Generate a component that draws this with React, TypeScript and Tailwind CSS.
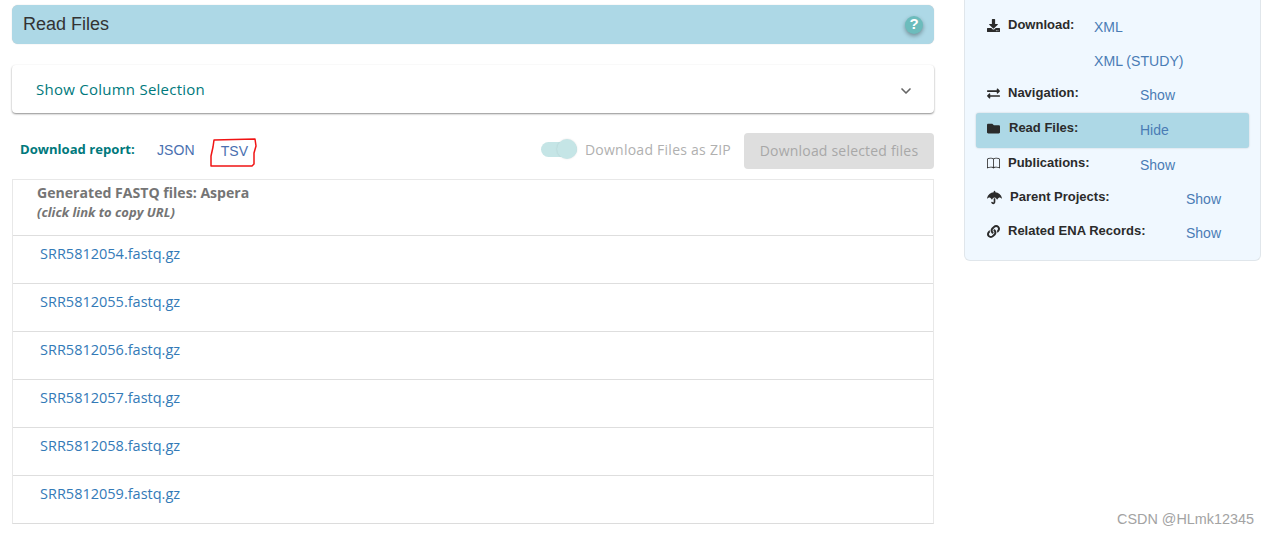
import { ChevronDown } from 'lucide-react';
import { FaDownload, FaExchangeAlt, FaFolder, FaUmbrella, FaLink } from 'react-icons/fa';
import { BsBook } from 'react-icons/bs';

const FILES = [
  'SRR5812054.fastq.gz',
  'SRR5812055.fastq.gz',
  'SRR5812056.fastq.gz',
  'SRR5812057.fastq.gz',
  'SRR5812058.fastq.gz',
  'SRR5812059.fastq.gz',
];

const SIDE_ROWS = [
  { icon: FaExchangeAlt, size: 13, label: 'Navigation:', value: 'Show', labelW: 'w-[132px]', iconW: 'w-[21px]', active: false },
  { icon: FaFolder, size: 13, label: 'Read Files:', value: 'Hide', labelW: 'w-[131px]', iconW: 'w-[22px]', active: true },
  { icon: BsBook, size: 13, label: 'Publications:', value: 'Show', labelW: 'w-[132px]', iconW: 'w-[21px]', active: false },
  { icon: FaUmbrella, size: 15, label: 'Parent Projects:', value: 'Show', labelW: 'w-[176px]', iconW: 'w-[23px]', active: false },
  { icon: FaLink, size: 13, label: 'Related ENA Records:', value: 'Show', labelW: 'w-[178px]', iconW: 'w-[21px]', active: false },
];

function MainColumn() {
  return (
    <main className="w-[922px] shrink-0 pt-[5px] font-['Open_Sans',sans-serif]">
      <div className="flex h-[39px] items-center justify-between rounded-md bg-[#add8e6] pl-[11px] pr-[11px] shadow-[0_0_1px_rgba(0,0,0,0.25)]">
        <h2 className="font-['Liberation_Sans',sans-serif] text-[18px] text-[#333]">Read Files</h2>
        <span className="flex h-[18px] w-[18px] items-center justify-center rounded-full bg-[#6cbcbc] font-['Liberation_Sans',sans-serif] text-[15px] font-black text-white shadow-[0_2px_4px_rgba(0,0,0,0.35)]">
          ?
        </span>
      </div>

      <div className="mt-[21px] flex h-[48px] items-center justify-between rounded-[4px] bg-white pl-6 pr-5 shadow-[0_1px_2px_rgba(0,0,0,0.45)]">
        <span className="text-[15px] tracking-[0.25px] text-[#00797c]">Show Column Selection</span>
        <ChevronDown size={16} strokeWidth={2.5} className="mt-1 text-[#666]" />
      </div>

      <div className="mt-5 flex h-[36px] items-center">
        <span className="mb-[2px] ml-2 w-[137px] text-[13.1px] font-bold text-[#00797c]">Download report:</span>
        <a className="mb-[2px] font-['Liberation_Sans',sans-serif] text-[14px] tracking-[0.1px] text-[#4a70b0]">JSON</a>
        <span className="relative mb-[2px] ml-[26px]">
          <a className="font-['Liberation_Sans',sans-serif] text-[14px] text-[#4a70b0]">TSV</a>
          <svg className="absolute left-[-11px] top-0" width="48" height="30" viewBox="0 0 48 30" fill="none">
            <path
              d="M4 2 L45 1 L46 8 L44 15 L44 26 L42 28 L1 28 L1 18 L3 9 Z"
              stroke="#f01414"
              strokeWidth="1.5"
              strokeLinejoin="round"
            />
          </svg>
        </span>
        <div className="ml-auto flex items-center">
          <div className="mb-[3px] flex items-center">
            <span className="relative mr-2 h-[15px] w-[36px] rounded-full bg-[#c5e5e6]">
              <span className="absolute right-0 top-[-3px] h-[20px] w-[20px] rounded-full bg-[#c5e5e6] shadow-[0_0_2px_rgba(0,0,0,0.12)]" />
            </span>
            <span className="text-[14px] tracking-[0.25px] text-[#b0b0b0]">Download Files as ZIP</span>
          </div>
          <button className="ml-[13px] h-[36px] w-[190px] rounded-[4px] bg-[#dedede] pb-[2px] text-[14px] tracking-[0.2px] text-[#a8a8a8]">
            Download selected files
          </button>
        </div>
      </div>

      <div className="mt-[10px] border border-[#e8e8e8] border-b-[#dcdcdc]">
        <div className="h-[55px] pl-6 pt-[3px] text-[#757575]">
          <div className="text-[14.1px] font-bold leading-[19px]">Generated FASTQ files: Aspera</div>
          <div className="mt-[1px] text-[13px] font-bold italic leading-[18px]">(click link to copy URL)</div>
        </div>
        {FILES.map((f) => (
          <div key={f} className="h-[48px] border-t border-[#dedede] pl-[27px] pt-[5px]">
            <a className="text-[14.5px] leading-[20px] text-[#337ab7]">{f}</a>
          </div>
        ))}
      </div>
    </main>
  );
}

function SidePanel() {
  return (
    <aside className="ml-[30px] h-[261px] w-[297px] shrink-0 rounded-b-md border-x border-b border-[#e0e6eb] bg-[#f0f8ff] font-['Liberation_Sans',sans-serif] text-[14px]">
      <div className="mt-[-24px] flex h-[34px] items-center pl-[129px]">
        <a className="text-[14.1px] text-[#4a7cb5]">XML (STUDY)</a>
      </div>
      <div className="flex h-[34px] items-center pl-[22px]">
        <FaDownload size={13} className="mb-1 text-[#2b2b2b]" />
        <span className="mb-1 ml-2 w-[86px] text-[13px] font-bold text-[#2b2b2b]">Download:</span>
        <a className="text-[#4a7cb5]">XML</a>
      </div>
      <div className="flex h-[34px] items-center pl-[129px] pt-[2px]">
        <a className="text-[14.1px] text-[#4a7cb5]">XML (STUDY)</a>
      </div>
      {SIDE_ROWS.map(({ icon: Icon, size, label, value, labelW, iconW, active }) => (
        <div
          key={label}
          className={
            active
              ? 'mx-[11px] mt-[1px] flex h-[35px] items-center rounded-[3px] bg-[#add8e6] pl-[11px] shadow-[0_0_2px_rgba(0,0,0,0.2)]'
              : 'mx-[10px] flex h-[34px] items-center pl-3'
          }
        >
          <span className={`${iconW} mb-1 flex shrink-0 items-center`}>
            <Icon size={size} className="text-[#2b2b2b]" />
          </span>
          <span className={`${labelW} ${active ? 'mb-[6px]' : 'mb-1'} shrink-0 text-[13px] font-bold text-[#2b2b2b]`}>{label}</span>
          <a className="text-[#4a7cb5]">{value}</a>
        </div>
      ))}
    </aside>
  );
}

export default function App() {
  return (
    <div className="relative h-[533px] w-[1270px] overflow-hidden bg-white">
      <div className="flex pl-3">
        <MainColumn />
        <SidePanel />
      </div>
      <div className="absolute left-[1117px] top-[509px] font-['Liberation_Sans',sans-serif] text-[14.4px] text-[#a3a3a3]">
        CSDN @HLmk12345
      </div>
    </div>
  );
}
